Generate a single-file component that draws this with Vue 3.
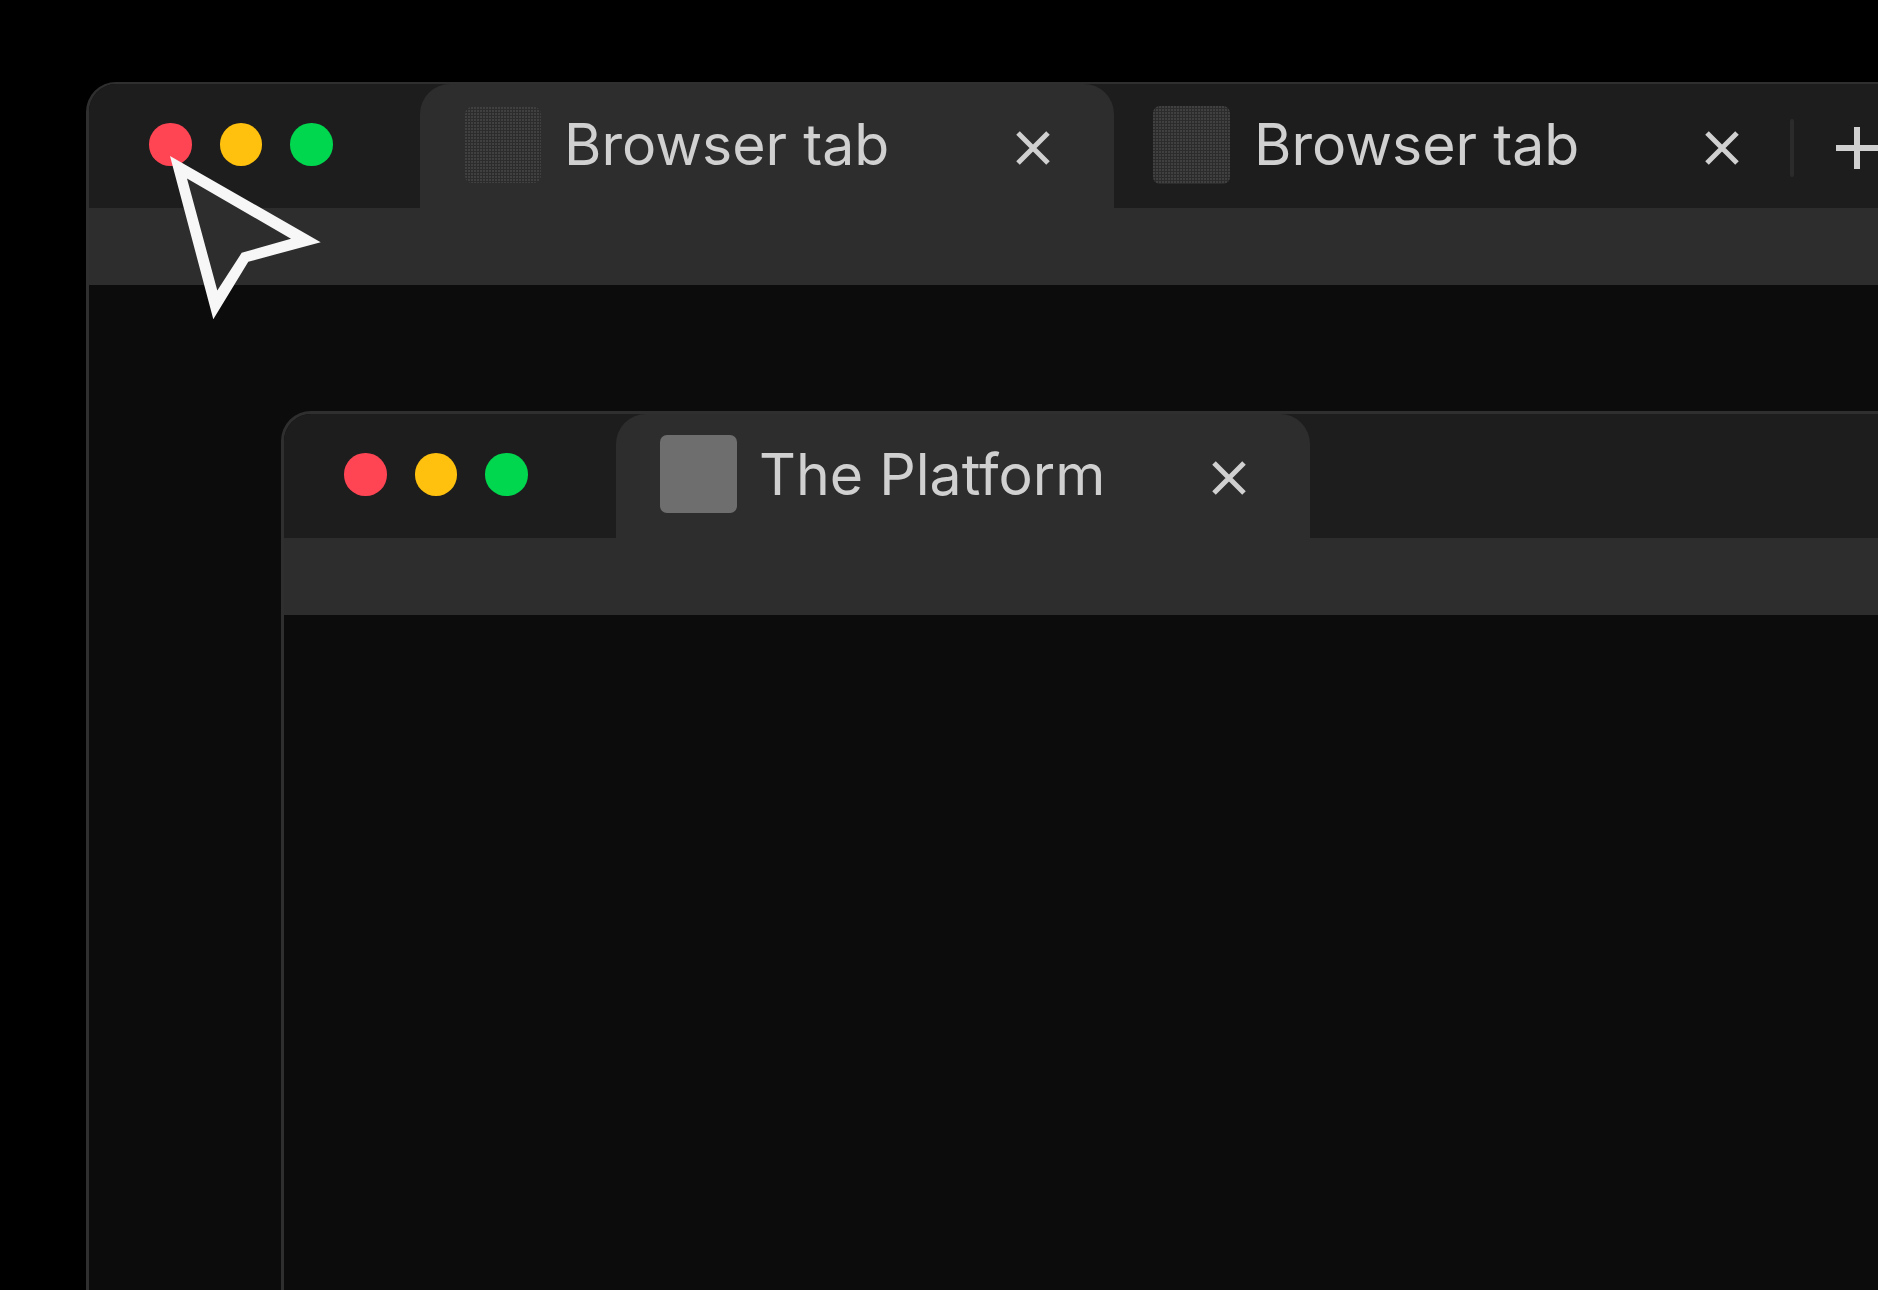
<script setup>
const lights = ['red', 'yellow', 'green']
</script>

<template>
  <div class="stage">
    <section class="window outer">
      <header class="titlebar">
        <div class="lights">
          <span v-for="l in lights" :key="l" class="light" :class="l"></span>
        </div>
        <div class="tab active first">
          <span class="favicon"></span>
          <span class="label">Browser tab</span>
          <svg class="close" viewBox="0 0 34 34"><path d="M2 2 32 32M32 2 2 32" /></svg>
        </div>
        <div class="tab second">
          <span class="favicon"></span>
          <span class="label">Browser tab</span>
          <svg class="close" viewBox="0 0 34 34"><path d="M2 2 32 32M32 2 2 32" /></svg>
        </div>
        <span class="divider"></span>
        <svg class="plus" viewBox="0 0 42 42"><path d="M21 0V42M0 21H42" /></svg>
      </header>
      <div class="toolbar"></div>
      <div class="content">
        <section class="window inner">
          <header class="titlebar">
            <div class="lights">
              <span v-for="l in lights" :key="l" class="light" :class="l"></span>
            </div>
            <div class="tab active platform">
              <span class="favicon solid"></span>
              <span class="label">The Platform</span>
              <svg class="close" viewBox="0 0 34 34"><path d="M2 2 32 32M32 2 2 32" /></svg>
            </div>
          </header>
          <div class="toolbar"></div>
          <div class="content"></div>
        </section>
      </div>
    </section>
    <svg class="cursor" viewBox="0 0 170 175" width="170" height="175">
      <path class="cursor-edge" d="M10 6 160.700 92.300 88.300 111.700 53.300 169.300Z" />
      <path class="cursor-fill" d="M27 28.500 57.300 140.500 81.700 102.800 131 88.800Z" />
    </svg>
  </div>
</template>

<style>
html, body { margin: 0; background: #000; }
</style>

<style scoped>
.stage {
  position: relative;
  width: 1878px;
  height: 1290px;
  overflow: hidden;
  background: #000;
  padding: 82px 0 0 86px;
  box-sizing: border-box;
  font-family: Inter, "Liberation Sans", sans-serif;
}
.window {
  border: solid #2f2f2f;
  border-width: 2px 0 0 3px;
  border-top-left-radius: 30px;
  overflow: hidden;
  background: #0c0c0c;
}
.outer { width: 1900px; height: 1300px; }
.inner { margin: 126px 0 0 192px; height: 900px; border-top-width: 3px; }
.titlebar {
  display: flex;
  align-items: flex-start;
  height: 124px;
  background: #1d1d1d;
}
.toolbar { height: 77px; background: #2d2d2d; }
.lights {
  display: flex;
  gap: 28px;
  padding: 39px 0 0 60px;
  width: 331px;
  flex: none;
  box-sizing: border-box;
}
.inner .lights { width: 332px; }
.light { width: 42.500px; height: 42.500px; border-radius: 50%; flex: none; }
.red { background: #ff4554; }
.yellow { background: #ffc10e; }
.green { background: #00d74f; }
.tab {
  display: flex;
  align-items: flex-start;
  flex: none;
  height: 124px;
  box-sizing: border-box;
  border-radius: 30px 30px 0 0;
}
.tab.active { background: #2d2d2d; }
.tab.first { width: 694px; padding-left: 45px; }
.tab.second { width: 676px; padding-left: 39px; }
.tab.platform { width: 694px; padding-left: 44px; }
.favicon {
  width: 77px;
  height: 77px;
  margin-top: 22px;
  border-radius: 7px;
  flex: none;
  background: radial-gradient(circle at 1px 1px, #414141 0.7px, transparent 1px) 0 0 / 3px 3px, #2c2c2c;
}
.first .favicon { margin-top: 23px; width: 76px; height: 76px; margin-right: 1px; }
.second .favicon { height: 78px; }
.favicon.solid { background: #6e6e6e; margin-top: 21px; height: 78px; }
.label {
  margin: 28px 0 0 23px;
  width: 390px;
  flex: none;
  font-size: 57.200px;
  line-height: 66px;
  color: #d0d0d0;
  white-space: nowrap;
}
.first .label { margin-left: 22px; width: 391px; }
.second .label { margin-left: 24px; width: 389px; }
.platform .label { margin-left: 22px; width: 391px; }
.close {
  width: 34px;
  height: 34px;
  margin: 47px 0 0 61px;
  flex: none;
  overflow: visible;
}
.second .close { margin-left: 61.500px; }
.platform .close { margin-left: 62px; }
.close path, .plus path { stroke: #d0d0d0; stroke-width: 5; fill: none; }
.plus path { stroke-width: 6; }
.divider {
  width: 4px;
  height: 58px;
  margin-top: 35px;
  border-radius: 2px;
  background: #2b2b2b;
  flex: none;
}
.plus {
  width: 42px;
  height: 42px;
  margin: 43px 0 0 42px;
  flex: none;
}
.cursor {
  position: absolute;
  left: 160px;
  top: 150px;
}
.cursor-edge { fill: #f7f7f7; }
.cursor-fill { fill: #2d2d2d; }
</style>
